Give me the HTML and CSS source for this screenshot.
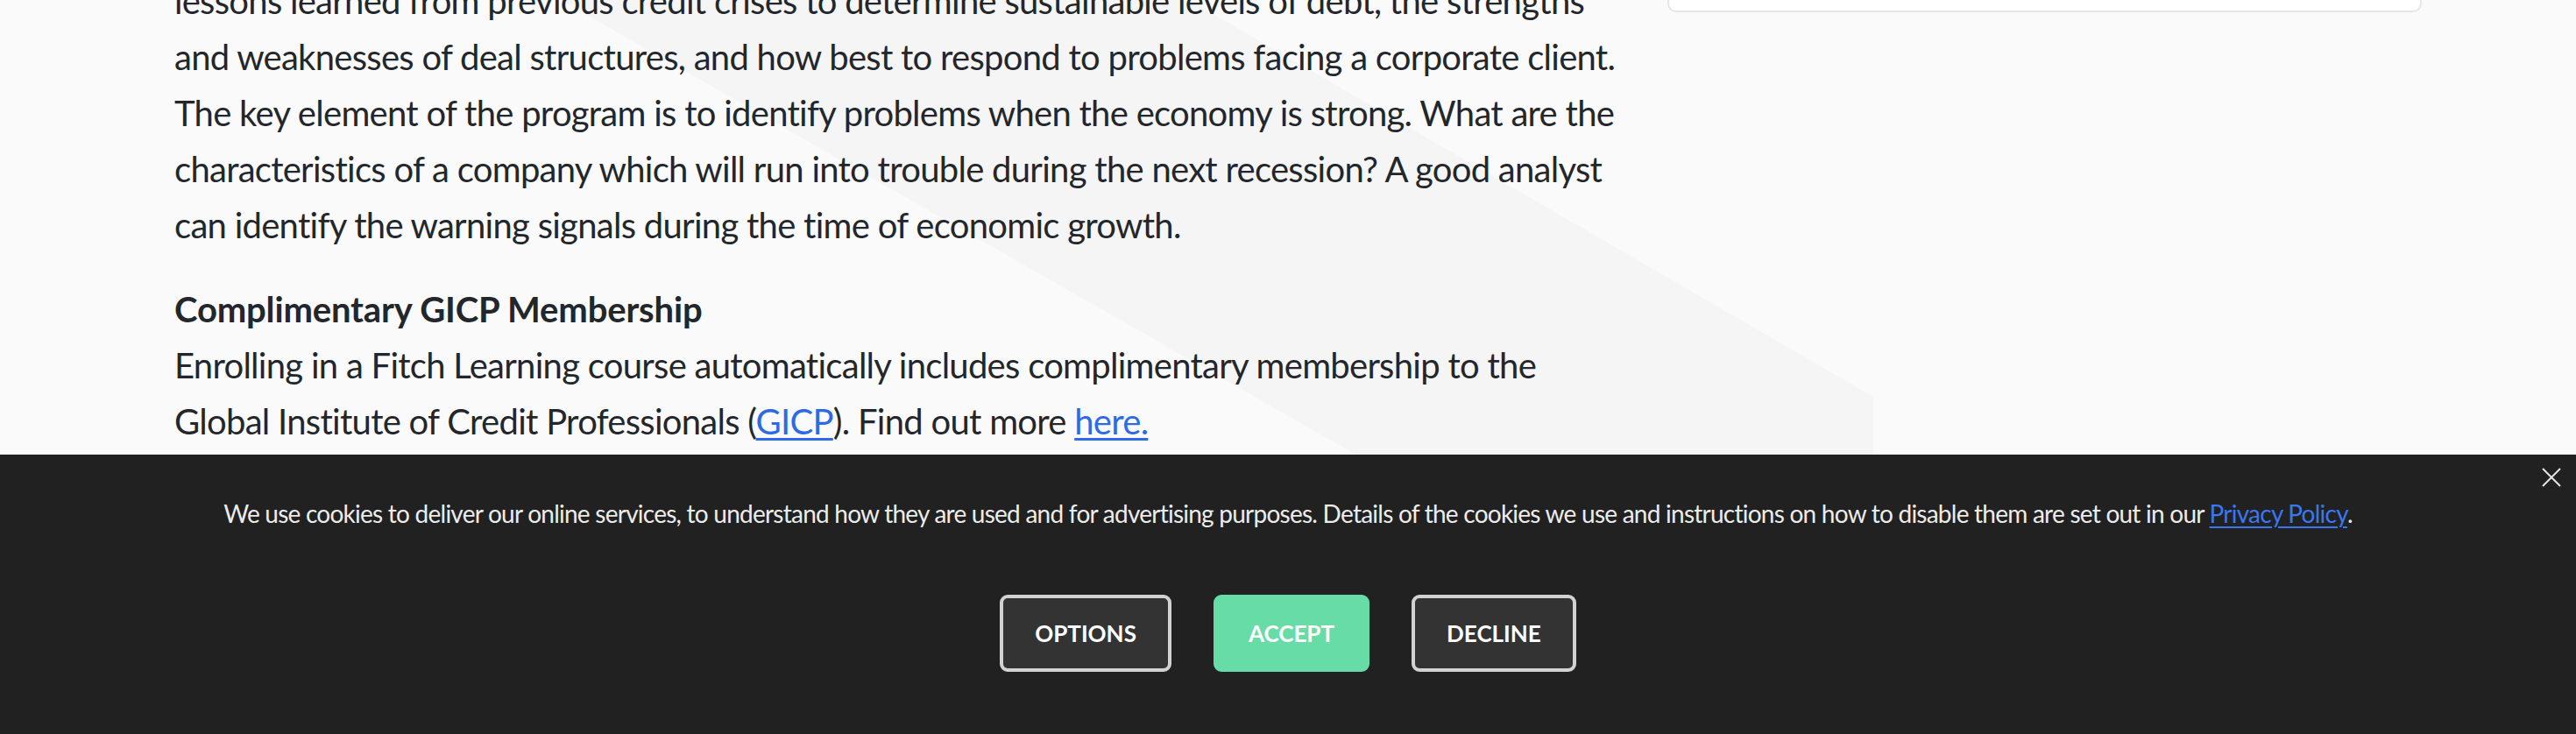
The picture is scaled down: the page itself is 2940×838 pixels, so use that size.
FILE: index.html
```html
<!DOCTYPE html>
<html lang="en">
<head>
<meta charset="utf-8">
<title>Fitch Learning</title>
<link rel="stylesheet" href="styles.css">
</head>
<body>
<div class="page">
  <div class="decor"></div>
  <div class="layout">
    <main class="content">
      <p>lessons learned from previous credit crises to determine sustainable levels of debt, the strengths and weaknesses of deal structures, and how best to respond to problems facing a corporate client. The key element of the program is to identify problems when the economy is strong. What are the characteristics of a company which will run into trouble during the next recession? A good analyst can identify the warning signals during the time of economic growth.</p>
      <p><strong>Complimentary GICP Membership</strong><br>Enrolling in a Fitch Learning course automatically includes complimentary membership to the Global Institute of Credit Professionals (<a href="#">GICP</a>). Find out more <a href="#">here.</a></p>
    </main>
    <aside class="sidebar">
      <div class="card"></div>
    </aside>
  </div>
</div>
<div class="cookie-banner">
  <button class="close" aria-label="Close">
    <svg width="22" height="22" viewBox="0 0 22 22"><path d="M1 1 L21 21 M21 1 L1 21" stroke="#e4e4e4" stroke-width="2" fill="none"/></svg>
  </button>
  <p class="cookie-text">We use cookies to deliver our online services, to understand how they are used and for advertising purposes. Details of the cookies we use and instructions on how to disable them are set out in our <a href="#">Privacy Policy</a>.</p>
  <div class="cookie-actions">
    <button class="btn btn-outline">OPTIONS</button>
    <button class="btn btn-accept">ACCEPT</button>
    <button class="btn btn-outline">DECLINE</button>
  </div>
</div>
</body>
</html>
```
FILE: styles.css
```css
html, body {
  margin: 0;
  padding: 0;
}
body {
  background: #fafafa;
  font-family: Lato, "Open Sans", sans-serif;
  color: #23272b;
}
.page {
  position: relative;
  height: 838px;
  overflow: hidden;
}
.decor {
  position: absolute;
  inset: 0;
  background: #f5f5f5;
  clip-path: polygon(640px 0, 1357px 0, 2138px 453px, 2138px 838px, 2105px 838px);
}
.layout {
  position: relative;
  display: flex;
  align-items: flex-start;
  gap: 44px;
  padding-left: 199px;
}
.content {
  width: 1660px;
  margin-top: -31px;
  font-size: 40px;
  line-height: 64px;
  letter-spacing: -0.018em;
}
.content p {
  margin: 0 0 32px;
}
.content strong {
  font-weight: 700;
  letter-spacing: -0.004em;
}
.content a {
  color: #2d6be6;
  text-decoration: underline;
  text-decoration-thickness: 3px;
  text-underline-offset: 4px;
}
.sidebar {
  width: 861px;
}
.card {
  height: 40px;
  margin-top: -30px;
  background: #fff;
  border: 2px solid #e6e6e6;
  border-radius: 10px;
}
.cookie-banner {
  position: fixed;
  left: 0;
  right: 0;
  bottom: 0;
  height: 319px;
  box-sizing: border-box;
  padding: 46px 40px 72px;
  background: #212121;
  color: #ececec;
  font-family: Lato, "Open Sans", sans-serif;
  display: flex;
  flex-direction: column;
  align-items: center;
}
.close {
  position: absolute;
  top: 15px;
  right: 17px;
  width: 22px;
  height: 22px;
  padding: 0;
  border: 0;
  background: none;
  display: flex;
}
.cookie-text {
  margin: 0;
  font-size: 28px;
  line-height: 42px;
  text-align: center;
  letter-spacing: -0.027em;
}
.cookie-text a {
  color: #3a77ee;
  text-decoration: underline;
  text-decoration-thickness: 2px;
  text-underline-offset: 4px;
}
.cookie-actions {
  display: flex;
  gap: 48px;
  margin-top: 72px;
}
.btn {
  height: 88px;
  box-sizing: border-box;
  padding: 0 36px;
  border: 4px solid #d2d2d2;
  border-radius: 9px;
  background: #333333;
  color: #ffffff;
  font-family: Lato, "Open Sans", sans-serif;
  font-weight: 700;
  font-size: 26px;
  letter-spacing: 0;
}
.btn-accept {
  background: #68dca6;
  border-color: #68dca6;
}
```
